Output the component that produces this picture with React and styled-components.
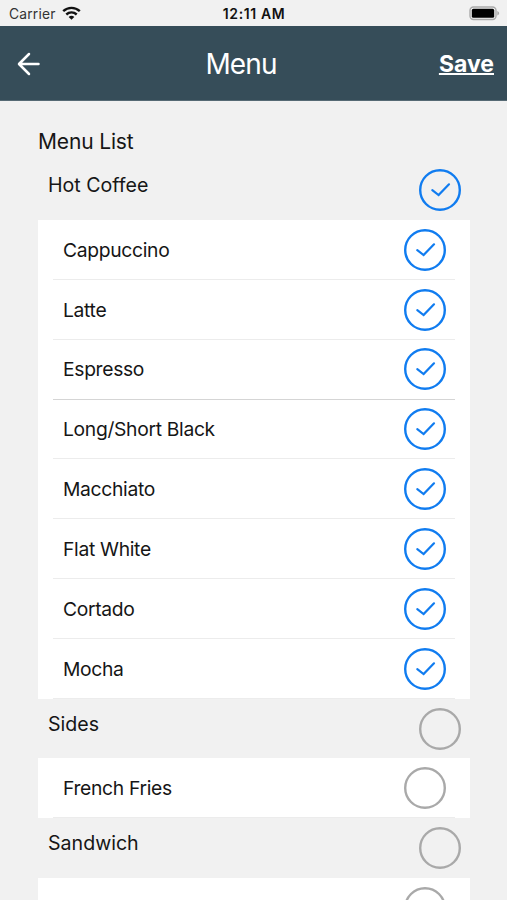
import React from 'react';
import styled, { createGlobalStyle } from 'styled-components';

const GlobalStyle = createGlobalStyle`
  * {
    box-sizing: border-box;
  }

  body {
    margin: 0;
    background: #f1f1f1;
    font-family: Inter, 'Liberation Sans', sans-serif;
    color: #161616;
    overflow: hidden;
  }
`;

const Screen = styled.div`
  width: 100%;
  height: 900px;
  overflow: hidden;
  display: flex;
  flex-direction: column;
`;

const StatusBar = styled.div`
  display: grid;
  grid-template-columns: 1fr auto 1fr;
  align-items: center;
  flex-shrink: 0;
  height: 25.5px;
  padding: 2px 7px 0 9px;
`;

const Carrier = styled.div`
  display: flex;
  align-items: center;
  gap: 6px;
  font-size: 13.8px;
  letter-spacing: 0.2px;
  color: #333;

  svg {
    margin-top: -2px;
  }
`;

const Clock = styled.div`
  font-size: 14px;
  font-weight: 600;
  letter-spacing: 0.6px;
  margin-right: 1px;
  color: #111;
`;

const BatteryIcon = styled.svg`
  justify-self: end;
`;

const Header = styled.header`
  display: grid;
  grid-template-columns: 1fr auto 1fr;
  align-items: center;
  flex-shrink: 0;
  height: 75.5px;
  padding: 2px 13px 0 17px;
  background: #364d59;
  border-bottom: 1px solid #566a74;
  color: #fff;
`;

const Title = styled.h1`
  margin: 0 29px 0 0;
  font-size: 28px;
  font-weight: 400;
  letter-spacing: -0.9px;
  line-height: 34px;
`;

const SaveButton = styled.button`
  justify-self: end;
  padding: 0;
  border: none;
  background: none;
  color: #fff;
  font-family: inherit;
  font-size: 23px;
  font-weight: 700;
  line-height: 28px;
  text-decoration: underline;
  text-decoration-thickness: 2px;
  text-decoration-skip-ink: none;
`;

const Content = styled.main`
  padding: 27px 37px 0 38px;
`;

const ListTitle = styled.h2`
  margin: 0;
  font-size: 21px;
  font-weight: 400;
  letter-spacing: -0.15px;
  line-height: 28px;
`;

const SectionHeader = styled.div`
  display: flex;
  justify-content: space-between;
  height: ${({ first }) => (first ? '64px' : '59.6px')};
  padding: ${({ first }) => (first ? '13px' : '9px')} 9px 0 10px;
  font-size: 19.6px;
  line-height: 32px;
`;

const Items = styled.ul`
  margin: 0;
  padding: 0;
  list-style: none;
  background: #fff;
`;

const Item = styled.li`
  display: flex;
  align-items: center;
  justify-content: space-between;
  height: 59.86px;
  margin: 0 15px;
  padding: 0.7px 9px 0 10px;
  border-bottom: 1px solid ${({ strong }) => (strong ? '#d5d5d5' : '#ececec')};
  font-size: 19.3px;
  letter-spacing: -0.32px;
`;

const CheckCircle = styled.svg`
  display: block;
  flex-shrink: 0;
  width: 42px;
  height: 42px;
`;

const sections = [
  {
    name: 'Hot Coffee',
    checked: true,
    items: ['Cappuccino', 'Latte', 'Espresso', 'Long/Short Black', 'Macchiato', 'Flat White', 'Cortado', 'Mocha'],
  },
  { name: 'Sides', checked: false, items: ['French Fries'] },
  { name: 'Sandwich', checked: false, items: ['Sandwich'] },
];

const Check = ({ checked }) => (
  <CheckCircle viewBox="0 0 42 42" fill="none" stroke={checked ? '#107cf0' : '#a9a9a9'} strokeWidth="2.4">
    <circle cx="21" cy="21" r="19.8" />
    {checked && <path d="M13.3 21.2L19.6 26L30 15.3" strokeLinecap="round" strokeWidth="2.2" />}
  </CheckCircle>
);

const WifiIcon = () => (
  <svg width="19" height="14" viewBox="0 0 19 14" fill="none" stroke="#111" strokeWidth="2.4">
    <path d="M1.2 5.2C6 0.7 13 0.7 17.8 5.2" />
    <path d="M4.3 8.5C7.3 5.7 11.7 5.7 14.7 8.5" />
    <path d="M9.5 13.7L6.7 10.9C8.3 9.5 10.7 9.5 12.3 10.9Z" fill="#111" stroke="none" />
  </svg>
);

export default function App() {
  return (
    <Screen>
      <GlobalStyle />
      <StatusBar>
        <Carrier>
          Carrier
          <WifiIcon />
        </Carrier>
        <Clock>12:11 AM</Clock>
        <BatteryIcon width="31" height="15" viewBox="0 0 31 15">
          <rect x="1" y="1" width="26" height="12.5" rx="3.5" fill="#f1f1f1" stroke="#aaa" strokeWidth="1.4" />
          <rect x="2.8" y="2.8" width="22.4" height="9" rx="1.6" fill="#000" />
          <path d="M28.3 5C30.7 6 30.7 8.5 28.3 9.5Z" fill="#aaa" />
        </BatteryIcon>
      </StatusBar>
      <Header>
        <svg width="24" height="24" viewBox="0 0 24 24" fill="none" stroke="#fff" strokeWidth="2.5" strokeLinecap="round" strokeLinejoin="round">
          <path d="M21.5 12H2.5M12 2L2 12L12 22" />
        </svg>
        <Title>Menu</Title>
        <SaveButton>Save</SaveButton>
      </Header>
      <Content>
        <ListTitle>Menu List</ListTitle>
        {sections.map((section, index) => (
          <section key={section.name}>
            <SectionHeader first={index === 0}>
              {section.name}
              <Check checked={section.checked} />
            </SectionHeader>
            <Items>
              {section.items.map((item) => (
                <Item key={item} strong={item === 'Espresso'}>
                  {item}
                  <Check checked={section.checked} />
                </Item>
              ))}
            </Items>
          </section>
        ))}
      </Content>
    </Screen>
  );
}
